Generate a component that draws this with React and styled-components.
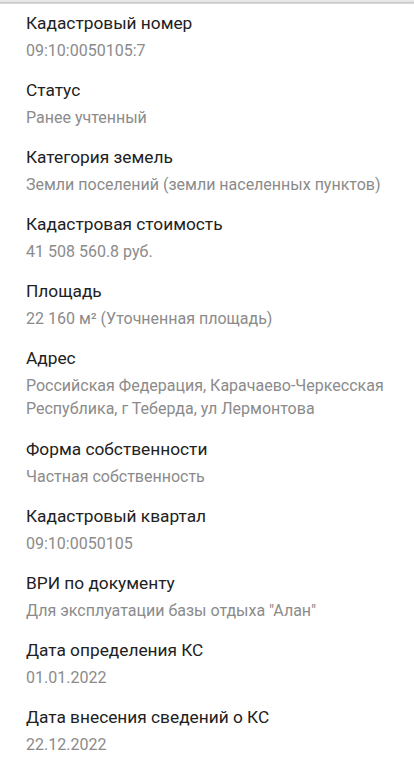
import React from "react";
import styled, { createGlobalStyle } from "styled-components";

const Global = createGlobalStyle`
  html, body { margin: 0; padding: 0; background: #ffffff; }
  body { font-family: Roboto, "Noto Sans", "Liberation Sans", sans-serif; }
  * { box-sizing: border-box; }
`;

const Page = styled.div`
  width: 414px;
  min-height: 767px;
  background: #ffffff;
  overflow: hidden;
`;

const TopEdge = styled.div`
  height: 4px;
  background: linear-gradient(
    to bottom,
    #ececec 0px,
    #e4e4e4 1.5px,
    #cbcbcb 2.5px,
    #d9d9d9 3.5px,
    #f6f6f6 4px
  );
`;

const List = styled.dl`
  margin: 0;
  padding: 7px 16px 0 26px;
  display: flex;
  flex-direction: column;
`;

const Item = styled.div`
  display: flex;
  flex-direction: column;
  gap: 4px;
  padding-bottom: 16.1px;
`;

const Label = styled.dt`
  margin: 0;
  font-size: 17.3px;
  line-height: 24px;
  color: #212121;
  font-weight: 400;
`;

const Value = styled.dd`
  margin: 0;
  font-size: 16px;
  line-height: 23px;
  color: #8b8b8b;
  font-weight: 400;
`;

const rows = [
  ["Кадастровый номер", "09:10:0050105:7"],
  ["Статус", "Ранее учтенный"],
  ["Категория земель", "Земли поселений (земли населенных пунктов)"],
  ["Кадастровая стоимость", "41 508 560.8 руб."],
  ["Площадь", "22 160 м² (Уточненная площадь)"],
  ["Адрес", "Российская Федерация, Карачаево-Черкесская Республика, г Теберда, ул Лермонтова"],
  ["Форма собственности", "Частная собственность"],
  ["Кадастровый квартал", "09:10:0050105"],
  ["ВРИ по документу", "Для эксплуатации базы отдыха \"Алан\""],
  ["Дата определения КС", "01.01.2022"],
  ["Дата внесения сведений о КС", "22.12.2022"],
];

export default function App() {
  return (
    <Page>
      <Global />
      <TopEdge />
      <List>
        {rows.map(([label, value]) => (
          <Item key={label}>
            <Label>{label}</Label>
            <Value>{value}</Value>
          </Item>
        ))}
      </List>
    </Page>
  );
}
